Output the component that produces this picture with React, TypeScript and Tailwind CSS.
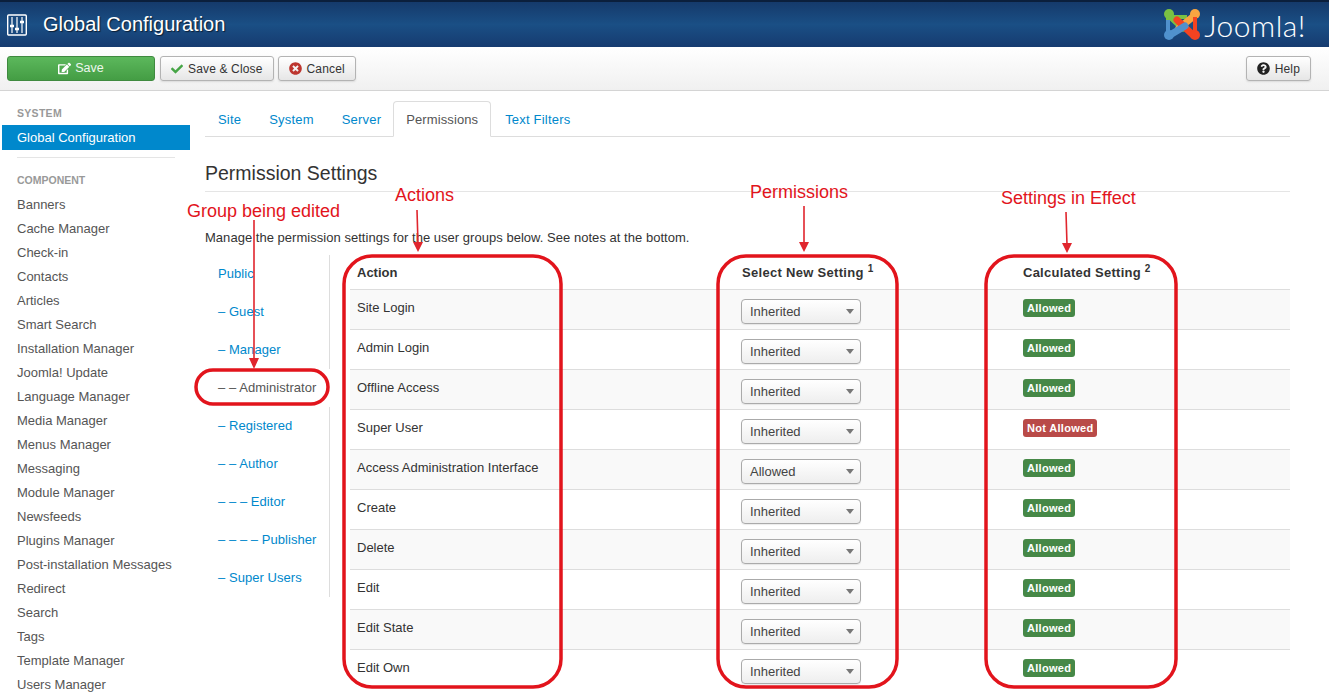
import React from "react";
import { FaCheck, FaTimesCircle, FaQuestionCircle, FaEdit } from "react-icons/fa";

const components = ["Banners","Cache Manager","Check-in","Contacts","Articles","Smart Search","Installation Manager","Joomla! Update","Language Manager","Media Manager","Menus Manager","Messaging","Module Manager","Newsfeeds","Plugins Manager","Post-installation Messages","Redirect","Search","Tags","Template Manager","Users Manager"];
const groups = ["Public","– Guest","– Manager","– – Administrator","– Registered","– – Author","– – – Editor","– – – – Publisher","– Super Users"];
const rows: [string,string,string][] = [
  ["Site Login","Inherited","Allowed"],["Admin Login","Inherited","Allowed"],["Offline Access","Inherited","Allowed"],["Super User","Inherited","Not Allowed"],["Access Administration Interface","Allowed","Allowed"],["Create","Inherited","Allowed"],["Delete","Inherited","Allowed"],["Edit","Inherited","Allowed"],["Edit State","Inherited","Allowed"],["Edit Own","Inherited","Allowed"],
];

function Btn({ children }: { children: React.ReactNode }) {
  return <button className="flex h-[25px] items-center gap-[5px] rounded-[3px] border border-[#b3b3b3] bg-gradient-to-b from-white to-[#e6e6e6] px-[10px] text-[12px] tracking-[0.15px] text-[#333] shadow-[0_1px_2px_rgba(0,0,0,0.1)]">{children}</button>;
}

function Logo() {
  return (
    <svg width="38" height="33" viewBox="0 0 38 33" className="mr-[3px]">
      <path d="M5 12 L5 9 L24 9" stroke="#7ac143" strokeWidth="4" fill="none"/>
      <path d="M6 7 L20 20" stroke="#7ac143" strokeWidth="7" strokeLinecap="round" fill="none"/>
      <circle cx="6" cy="6" r="5" fill="#7ac143"/>
      <path d="M31 8 L16 20" stroke="#f9a541" strokeWidth="7" strokeLinecap="round" fill="none"/>
      <circle cx="32" cy="6" r="5" fill="#f9a541"/>
      <path d="M32 9 L32 26" stroke="#f44321" strokeWidth="4" fill="none"/>
      <path d="M14 12 L30 27" stroke="#f44321" strokeWidth="7" strokeLinecap="round" fill="none"/>
      <circle cx="32" cy="27" r="5" fill="#f44321"/>
      <path d="M5 12 L5 26" stroke="#5091cd" strokeWidth="4" fill="none"/>
      <path d="M22 18 L7 27" stroke="#5091cd" strokeWidth="7" strokeLinecap="round" fill="none"/>
      <circle cx="6" cy="27" r="5" fill="#5091cd"/>
    </svg>
  );
}

export default function App() {
  return (
    <div className="relative flex h-[694px] w-[1329px] flex-col overflow-hidden bg-white text-[13px] text-[#333]" style={{ fontFamily: '"Liberation Sans", Arial, sans-serif' }}>
      <header className="flex h-[47px] shrink-0 items-center justify-between border-t-2 border-[#0b1f3c] bg-gradient-to-b from-[#153a6b] via-[#1a4f85] to-[#163b70] pl-[7px] pr-[23px]">
        <div className="flex items-center gap-[16px]">
          <svg width="20" height="22" viewBox="0 0 20 22" fill="none" stroke="white" strokeWidth="1.4">
            <rect x="0.7" y="1" width="18.6" height="20" rx="1"/>
            <path d="M5 3v16M10 3v16M15 3v16" strokeWidth="1.2"/>
            <path d="M3 12h4M8 15h4M13 8h4" strokeWidth="2.6"/>
          </svg>
          <h1 className="mb-[2px] text-[20px] font-normal leading-none text-white [text-shadow:1px_1px_1px_rgba(0,0,0,0.6)]">Global Configuration</h1>
        </div>
        <div className="flex items-center">
          <Logo />
          <span className="relative text-[30px] font-light leading-none tracking-[0.5px] text-white" style={{ fontFamily: 'Lato, sans-serif' }}>Joomla!</span>
        </div>
      </header>

      <div className="flex h-[44px] shrink-0 items-center justify-between border-b border-[#d4d4d4] bg-gradient-to-b from-white to-[#f0f0f0] pl-[7px] pr-[18px]">
        <div className="flex items-center gap-[4px]">
          <button className="mr-[1px] flex h-[25px] w-[148px] items-center justify-center gap-[4px] rounded-[3px] border border-[#3f8a3f] bg-gradient-to-b from-[#5cb85c] to-[#449d44] text-[12.5px] text-white/90">
            <FaEdit className="text-[13px] text-white" />Save
          </button>
          <Btn><FaCheck className="text-[12px] text-[#46a546]" />Save &amp; Close</Btn>
          <Btn><FaTimesCircle className="text-[13px] text-[#bd362f]" />Cancel</Btn>
        </div>
        <Btn><FaQuestionCircle className="text-[13px] text-[#222]" />Help</Btn>
      </div>

      <div className="flex min-h-0 flex-1">
        <aside className="w-[205px] shrink-0 pl-[2px] pt-[16px]">
          <div className="w-[188px]">
            <div className="pl-[15px] text-[10.5px] font-bold leading-[12px] tracking-[0.3px] text-[#999]">SYSTEM</div>
            <div className="mt-[6px] flex h-[25px] items-center bg-[#0088cc] pl-[15px] text-white">Global Configuration</div>
            <div className="ml-[15px] mt-[7px] w-[158px] border-t border-[#e5e5e5]" />
            <div className="mt-[16px] pl-[15px] text-[10.5px] font-bold leading-[12px] text-[#999]">COMPONENT</div>
            <ul className="mt-[7px]">
              {components.map((c) => <li key={c} className="flex h-[24px] items-center pl-[15px] text-[#555]">{c}</li>)}
            </ul>
          </div>
        </aside>

        <main className="min-w-0 flex-1 pr-[39px] pt-[10px]">
          <div className="flex h-[36px] items-end gap-[2px] border-b border-[#ddd]">
            {["Site","System","Server"].map((t) => (
              <div key={t} className="flex h-[35px] items-center px-[13px] pt-[2px] tracking-[0.2px] text-[#0088cc]">{t}</div>
            ))}
            <div className="mb-[-1px] ml-[-3px] flex h-[36px] items-center rounded-t-[4px] border border-[#ddd] border-b-white bg-white px-[12px] pt-[1px] tracking-[0.1px] text-[#555]">Permissions</div>
            <div className="ml-[-1px] flex h-[35px] items-center px-[13px] pt-[2px] tracking-[0.2px] text-[#0088cc]">Text Filters</div>
          </div>
          <h2 className="mt-[25px] border-b border-[#e5e5e5] pb-[6px] text-[19.5px] font-normal leading-[23px] text-[#333]">Permission Settings</h2>
          <p className="mt-[38px] leading-[15px] tracking-[0.03px]">Manage the permission settings for the user groups below. See notes at the bottom.</p>

          <div className="mt-[10px] flex">
            <ul className="w-[125px] shrink-0 self-start">
              {groups.map((g) => {
                const active = g.includes("Administrator");
                return (
                  <li key={g} className={`flex h-[38px] items-center pl-[13px] tracking-[0.05px] ${active ? "text-[#555]" : "border-r border-[#ddd] text-[#0088cc]"}`}>{g}</li>
                );
              })}
            </ul>
            <table className="ml-[20px] flex-1 border-collapse">
              <thead>
                <tr className="h-[34px] text-left">
                  <th className="w-[384px] px-[7px] pt-[2px] font-bold">Action</th>
                  <th className="w-[281px] pl-[8px] pr-[6px] pt-[2px] font-bold tracking-[0.3px]">Select New Setting <sup className="text-[10px]">1</sup></th>
                  <th className="px-[8px] pt-[2px] font-bold tracking-[0.25px]">Calculated Setting <sup className="text-[10px]">2</sup></th>
                </tr>
              </thead>
              <tbody>
                {rows.map((r, i) => (
                  <tr key={r[0]} className={`h-[40px] border-t border-[#ddd] ${i % 2 === 0 ? "bg-[#f9f9f9]" : "bg-white"}`}>
                    <td className="px-[7px] pb-[3px] pt-0">{r[0]}</td>
                    <td className="px-[7px] pt-[5px]">
                      <div className="flex h-[25px] w-[120px] items-center justify-between rounded-[4px] border border-[#aaa] bg-gradient-to-b from-white to-[#eee] pl-[8px] pr-[6px] text-[#444] shadow-[0_1px_1px_rgba(0,0,0,0.08)]">
                        {r[1]}
                        <span className="h-0 w-0 border-x-[4px] border-t-[5px] border-x-transparent border-t-[#777]" />
                      </div>
                    </td>
                    <td className="px-[8px] pb-[3px]">
                      <span className={`inline-block rounded-[3px] px-[4px] text-[11px] font-bold leading-[18px] tracking-[0.3px] text-white ${r[2] === "Allowed" ? "bg-[#468847]" : "bg-[#b94a48]"}`}>{r[2]}</span>
                    </td>
                  </tr>
                ))}
              </tbody>
            </table>
          </div>
        </main>
      </div>

      <svg className="pointer-events-none absolute left-0 top-0" width="1329" height="694" fill="none" stroke="#e2141c">
        <rect x="344" y="256" width="217" height="431" rx="28" strokeWidth="3.5"/>
        <rect x="718" y="256" width="179" height="431" rx="28" strokeWidth="3.5"/>
        <rect x="986" y="256" width="190" height="431" rx="28" strokeWidth="3.5"/>
        <rect x="196" y="370" width="132" height="34" rx="17" strokeWidth="3.5"/>
        <path d="M254 220V360M417 210L418 244M804 206V244M1066 212L1067 245" stroke="#e0262e" strokeWidth="1.6"/>
        <path d="M249 358h10l-5 11zM413 242h10l-5 10zM799 242h10l-5 10zM1062 243h10l-5 10z" fill="#e0262e" stroke="none"/>
      </svg>
      <span className="absolute left-[187px] top-[201px] text-[18px] leading-[21px] text-[#e2141c]">Group being edited</span>
      <span className="absolute left-[395px] top-[185px] text-[18px] leading-[21px] text-[#e2141c]">Actions</span>
      <span className="absolute left-[750px] top-[182px] text-[18px] leading-[21px] text-[#e2141c]">Permissions</span>
      <span className="absolute left-[1001px] top-[188px] text-[18px] leading-[21px] text-[#e2141c]">Settings in Effect</span>
    </div>
  );
}
